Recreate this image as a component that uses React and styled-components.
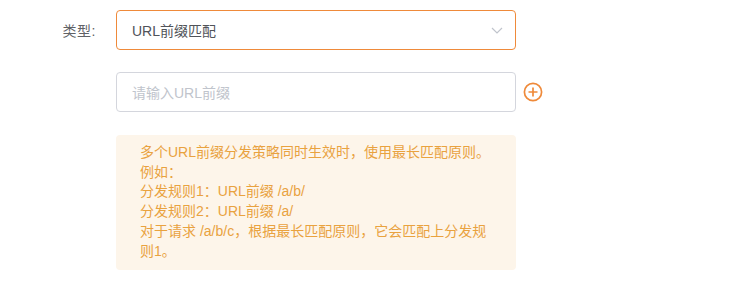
import React from "react";
import styled, { createGlobalStyle } from "styled-components";

const Global = createGlobalStyle`
  body {
    margin: 0;
    background: #fff;
    font-family: "Liberation Sans", "Noto Sans CJK SC", sans-serif;
  }
`;

const Form = styled.div`
  padding: 10px 0 0 0;
  display: flex;
  flex-direction: column;
  gap: 22px;
`;

const Row = styled.div`
  display: flex;
  align-items: center;
`;

const Label = styled.div`
  width: 116px;
  box-sizing: border-box;
  padding-right: 20px;
  text-align: right;
  font-size: 14px;
  color: #606266;
  letter-spacing: 0.5px;
`;

const Box = styled.div`
  width: 400px;
  height: 40px;
  box-sizing: border-box;
  border: 1px solid ${p => (p.$active ? "#ef8a3a" : "#d4d6dd")};
  border-radius: 4px;
  display: flex;
  align-items: center;
  justify-content: space-between;
  padding: 0 15px;
  font-size: 14px;
  color: ${p => (p.$placeholder ? "#c0c4cc" : "#505359")};
`;

const Chevron = styled.svg`
  width: 14px;
  height: 14px;
  margin-right: -4px;
`;

const AddButton = styled.button`
  border: none;
  background: none;
  padding: 0;
  margin-left: 7px;
  width: 20px;
  height: 20px;
  display: flex;
  cursor: pointer;
`;

const Notice = styled.div`
  margin-left: 116px;
  margin-top: 23px;
  width: 400px;
  box-sizing: border-box;
  background: #fdf5ea;
  border-radius: 4px;
  padding: 8px 24px 9px 24px;
  font-size: 14px;
  line-height: 19.7px;
  color: #e9a23f;
`;

export default function App() {
  return (
    <>
      <Global />
      <Form>
        <Row>
          <Label>类型:</Label>
          <Box $active>
            <span>URL前缀匹配</span>
            <Chevron viewBox="0 0 14 14">
              <path d="M2 5l5 5 5-5" fill="none" stroke="#c0c4cc" strokeWidth="1.2" />
            </Chevron>
          </Box>
        </Row>
        <Row>
          <Label />
          <Box $placeholder>请输入URL前缀</Box>
          <AddButton>
            <svg width="20" height="20" viewBox="0 0 20 20">
              <circle cx="10" cy="10" r="8.6" fill="none" stroke="#ef8a3a" strokeWidth="1.7" />
              <path d="M10 5.5v9M5.5 10h9" stroke="#ef8a3a" strokeWidth="1.7" />
            </svg>
          </AddButton>
        </Row>
      </Form>
      <Notice>
        多个URL前缀分发策略同时生效时，使用最长匹配原则。<br />
        例如：<br />
        分发规则1：URL前缀 /a/b/<br />
        分发规则2：URL前缀 /a/<br />
        对于请求 /a/b/c，根据最长匹配原则，它会匹配上分发规则1。
      </Notice>
    </>
  );
}
